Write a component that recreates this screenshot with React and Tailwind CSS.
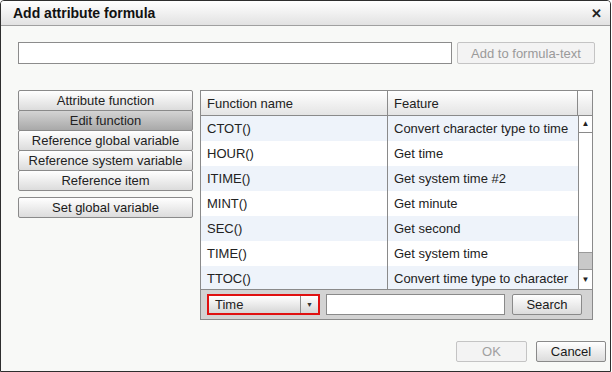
import React from "react";

const rows = [
  ["CTOT()", "Convert character type to time"],
  ["HOUR()", "Get time"],
  ["ITIME()", "Get system time #2"],
  ["MINT()", "Get minute"],
  ["SEC()", "Get second"],
  ["TIME()", "Get system time"],
  ["TTOC()", "Convert time type to character"],
];

const menu = [
  "Attribute function",
  "Edit function",
  "Reference global variable",
  "Reference system variable",
  "Reference item",
];

const btn =
  "border border-[#8a8a8a] rounded-[2px] bg-gradient-to-b from-white to-[#dcdcdc] text-[#1a1a1a]";

const App = () => {
  return (
    <div
      className="w-[612px] h-[372px] bg-white text-[13px] leading-none text-[#222]"
      style={{ fontFamily: "'Liberation Sans', Arial, sans-serif" }}
    >
      <div className="w-[611px] h-[372px] border border-[#2e2e2e] rounded-t-[4px] overflow-hidden bg-[#f8f9f7] flex flex-col">
        {/* title bar */}
        <div className="h-[25px] shrink-0 flex items-center justify-between pl-[12px] pr-[8px] bg-gradient-to-b from-white to-[#e2e2e2] border-b border-[#a0a0a0]">
          <span className="font-bold text-[14px] text-[#111]">Add attribute formula</span>
          <span className="font-bold text-[13px] text-[#222]">✕</span>
        </div>

        {/* formula input */}
        <div className="flex items-center mt-[16px] ml-[17px] gap-[5px]">
          <div className="w-[434px] h-[22px] bg-white border border-[#8c8c8c]" />
          <div className="w-[138px] h-[22px] border border-[#c4c4c4] rounded-[2px] bg-[#f3f3f3] text-[#9a9a9a] flex items-center justify-center whitespace-nowrap">
            Add to formula-text
          </div>
        </div>

        {/* main */}
        <div className="flex mt-[26px] ml-[17px] gap-[7px]">
          <div className="w-[175px] flex flex-col">
            {menu.map((m) => (
              <div
                key={m}
                className={`h-[21px] -mb-px flex items-center justify-center whitespace-nowrap border border-[#8a8a8a] rounded-[2px] ${
                  m === "Edit function"
                    ? "bg-gradient-to-b from-[#d4d4d4] to-[#a9a9a9]"
                    : "bg-gradient-to-b from-white to-[#dcdcdc]"
                }`}
              >
                {m}
              </div>
            ))}
            <div className={`h-[21px] mt-[7px] flex items-center justify-center whitespace-nowrap ${btn}`}>
              Set global variable
            </div>
          </div>

          {/* grid */}
          <div className="w-[393px] h-[230px] border border-[#8a8a8a] flex flex-col bg-white">
            <div className="h-[25px] shrink-0 flex border-b border-[#8a8a8a] bg-gradient-to-b from-white to-[#e4e4e4]">
              <div className="w-[187px] border-r border-[#8a8a8a] flex items-center pl-[6px]">Function name</div>
              <div className="w-[190px] border-r border-[#8a8a8a] flex items-center pl-[6px]">Feature</div>
              <div className="flex-1" />
            </div>
            <div className="h-[173px] shrink-0 flex overflow-hidden">
              <div className="w-[377px] flex flex-col">
                {rows.map(([n, f], i) => (
                  <div
                    key={n}
                    className={`h-[25px] shrink-0 flex ${i % 2 === 0 ? "bg-[#eef3fa]" : "bg-white"}`}
                  >
                    <div className="w-[187px] border-r border-[#8a8a8a] flex items-center pl-[6px]">{n}</div>
                    <div className="w-[190px] flex items-center pl-[6px] whitespace-nowrap overflow-hidden">{f}</div>
                  </div>
                ))}
              </div>
              {/* scrollbar */}
              <div className="flex-1 border-l border-[#8a8a8a] flex flex-col bg-[#f4f4f4]">
                <div className="h-[17px] border-b border-[#8a8a8a] bg-white flex items-center justify-center text-[8px] text-[#222]">▲</div>
                <div className="flex-1 bg-white" />
                <div className="h-[18px] border-y border-[#9a9a9a] bg-[#c9c9c9]" />
                <div className="h-[19px] bg-white flex items-center justify-center text-[8px] text-[#222]">▼</div>
              </div>
            </div>
            <div className="flex-1 bg-[#d3d3d3] border-t border-[#8a8a8a] flex items-center pl-[6px] gap-[6px]">
              <div className="w-[113px] h-[21px] border-2 border-[#e01010] flex bg-gradient-to-b from-white to-[#d6d6d6]">
                <div className="flex-1 flex items-center pl-[6px] border-r border-[#8a8a8a]">Time</div>
                <div className="w-[17px] flex items-center justify-center text-[7px] text-[#333]">▼</div>
              </div>
              <div className="w-[179px] h-[21px] bg-white border border-[#8a8a8a]" />
              <div className={`w-[70px] h-[21px] ml-[1px] flex items-center justify-center ${btn}`}>Search</div>
            </div>
          </div>
        </div>

        {/* footer */}
        <div className="flex justify-end gap-[9px] mt-auto mb-[9px] mr-[4px]">
          <div className="w-[71px] h-[21px] border border-[#c4c4c4] rounded-[2px] bg-[#f3f3f3] text-[#a0a0a0] flex items-center justify-center">
            OK
          </div>
          <div className={`w-[70px] h-[21px] flex items-center justify-center ${btn}`}>Cancel</div>
        </div>
      </div>
    </div>
  );
};

export default App;
